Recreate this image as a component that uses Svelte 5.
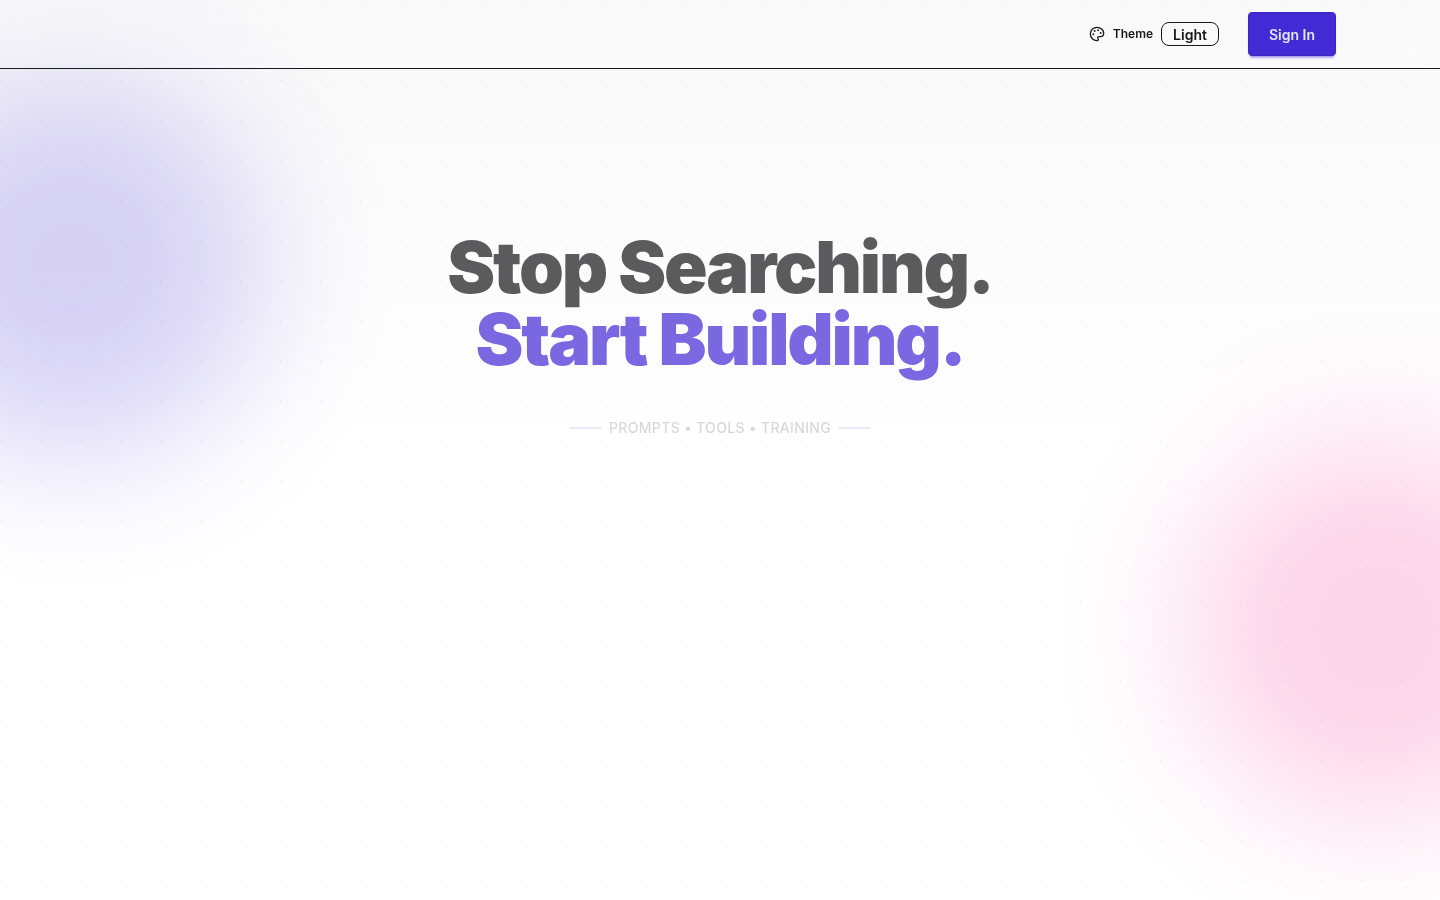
<script lang="ts">
  let theme = $state('Light');

  const topics = ['PROMPTS', 'TOOLS', 'TRAINING'];
  const swatches = [
    { cx: 13.5, cy: 6.5 },
    { cx: 17.5, cy: 10.5 },
    { cx: 6.5, cy: 12.5 },
    { cx: 8.5, cy: 7.5 }
  ];

  function toggleTheme() {
    theme = theme === 'Light' ? 'Dark' : 'Light';
  }
</script>

<div class="page">
  <div class="backdrop" aria-hidden="true">
    <div class="dots"></div>
    <div class="blob blob-primary"></div>
    <div class="blob blob-secondary"></div>
  </div>

  <header class="topbar">
    <div class="topbar-inner">
      <button class="theme-btn" type="button" onclick={toggleTheme}>
        <svg class="theme-icon" viewBox="0 0 24 24" fill="none" stroke="currentColor" stroke-width="2" stroke-linecap="round" stroke-linejoin="round" aria-hidden="true">
          <path d="M12 22a1 1 0 0 1 0-20 10 9 0 0 1 10 9 5 5 0 0 1-5 5h-2.25a1.75 1.75 0 0 0-1.4 2.8l.3.4a1.75 1.75 0 0 1-1.4 2.8z" />
          {#each swatches as s}
            <circle cx={s.cx} cy={s.cy} r=".5" fill="currentColor" />
          {/each}
        </svg>
        <span class="theme-label">Theme</span>
        <span class="badge">{theme}</span>
      </button>
      <button class="signin-btn" type="button">Sign In</button>
    </div>
  </header>

  <main class="hero">
    <h1 class="headline">
      <span class="line">Stop Searching.</span>
      <span class="line accent">Start Building.</span>
    </h1>
    <div class="tagline">
      <span class="rule"></span>
      <p>{topics.join(' • ')}</p>
      <span class="rule"></span>
    </div>
  </main>
</div>

<style>
  :global(body) {
    margin: 0;
    background: #fff;
  }

  .page {
    position: relative;
    min-height: 100vh;
    overflow: hidden;
    background: linear-gradient(to bottom, #f8f8f8, #fff 50%);
    color: #18181b;
    font-family: Inter, 'Liberation Sans', sans-serif;
  }

  .backdrop,
  .dots {
    position: absolute;
    inset: 0;
    pointer-events: none;
  }

  .dots {
    background-image: radial-gradient(circle at 1px 1px, rgba(24, 24, 27, 0.035) 1px, transparent 0);
    background-size: 40px 40px;
  }

  .blob {
    position: absolute;
    width: 384px;
    height: 384px;
    border-radius: 50%;
    filter: blur(68px);
    opacity: 0.2;
  }

  .blob-primary {
    top: 76px;
    left: -120px;
    background: #422ad5;
  }

  .blob-secondary {
    top: 436px;
    right: -128px;
    background: #f43090;
  }

  .topbar {
    position: relative;
    background: rgba(255, 255, 255, 0.2);
    backdrop-filter: blur(12px);
    border-bottom: 1px solid #18181b;
  }

  .topbar-inner {
    display: flex;
    align-items: center;
    justify-content: flex-end;
    gap: 16px;
    max-width: 1280px;
    margin: 0 auto;
    padding: 12px 24px;
    box-sizing: border-box;
  }

  .theme-btn {
    display: flex;
    align-items: center;
    gap: 8px;
    padding: 0 12px;
    border: 1px solid transparent;
    background: none;
    color: inherit;
    font: inherit;
    cursor: pointer;
  }

  .theme-icon {
    width: 16px;
    height: 16px;
  }

  .theme-label {
    font-size: 12px;
    line-height: 16px;
    font-weight: 600;
  }

  .badge {
    display: flex;
    align-items: center;
    height: 24px;
    padding: 0 11px;
    box-sizing: border-box;
    border: 1px solid #18181b;
    border-radius: 8px;
    font-size: 14px;
    font-weight: 600;
  }

  .signin-btn {
    height: 44px;
    padding: 0 20px;
    border: 1px solid #3b26c0;
    border-radius: 4px;
    background: #422ad5;
    color: #e0e7ff;
    font: inherit;
    font-size: 14px;
    font-weight: 600;
    box-shadow: 0 3px 2px -2px rgba(66, 42, 213, 0.3), 0 4px 3px -2px rgba(66, 42, 213, 0.3);
    cursor: pointer;
  }

  .hero {
    position: relative;
    display: flex;
    flex-direction: column;
    align-items: center;
    gap: 43px;
    padding: 162px 24px 96px;
  }

  .headline {
    margin: 0;
    font-size: 72px;
    line-height: 72px;
    font-weight: 900;
    letter-spacing: -0.03em;
    text-align: center;
    opacity: 0.7;
  }

  .line {
    display: block;
  }

  .accent {
    color: #422ad5;
  }

  .tagline {
    display: flex;
    align-items: center;
    gap: 8px;
  }

  .tagline p {
    margin: 0;
    font-size: 14px;
    line-height: 20px;
    font-weight: 500;
    letter-spacing: 0.025em;
    opacity: 0.17;
  }

  .rule {
    width: 32px;
    height: 2px;
    background: rgba(66, 42, 213, 0.1);
  }
</style>
